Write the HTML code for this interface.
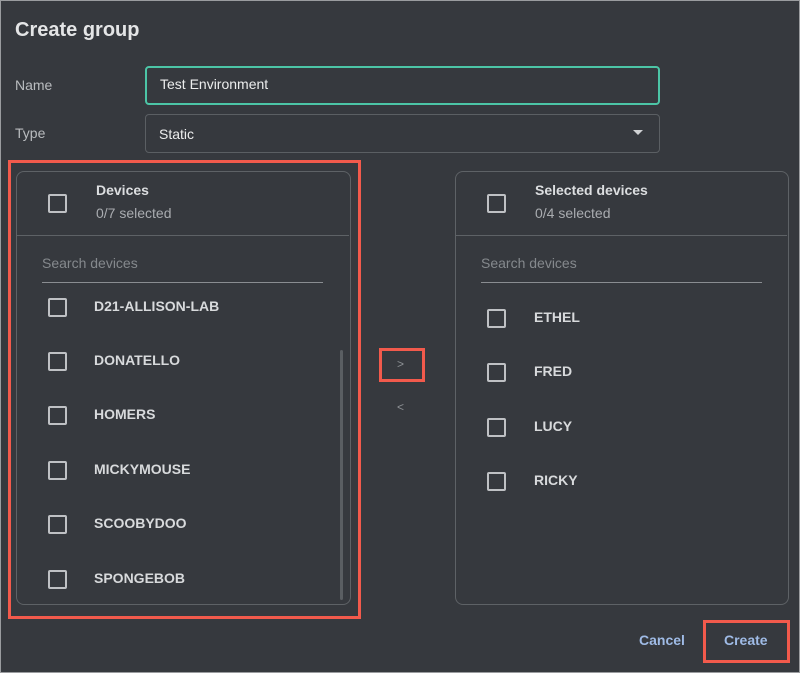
<!DOCTYPE html>
<html><head><style>
body{margin:0;width:800px;height:673px;background:#36393e;font-family:"Liberation Sans",sans-serif;position:relative;overflow:hidden;color:#e6e7e8}
.a{position:absolute}
.frame{left:0;top:0;width:798px;height:671px;border:1px solid #9a9c9f}
.cb{position:absolute;width:15px;height:15px;border:2px solid #bfc1c4;border-radius:2px}
.it{position:absolute;font-size:14px;font-weight:bold;color:#d8dadc}
.panel{border:1px solid #5e6266;border-radius:8px}
.red{border:3px solid #f25a4c}
</style></head><body>
<div class="a frame"></div>
<div class="a" style="left:15px;top:19px;font-size:20px;font-weight:bold;color:#e4e5e6">Create group</div>
<div class="a" style="left:15px;top:77px;font-size:14px;color:#b9bcbf">Name</div>
<div class="a" style="left:15px;top:125px;font-size:14px;color:#b9bcbf">Type</div>
<div class="a" style="left:145px;top:66px;width:511px;height:35px;border:2px solid #4cc5a6;border-radius:4px"></div>
<div class="a" style="left:160px;top:76px;font-size:14px;color:#eceded">Test Environment</div>
<div class="a" style="left:145px;top:114px;width:513px;height:37px;border:1px solid #5b5f63;border-radius:4px"></div>
<div class="a" style="left:159px;top:126px;font-size:14px;color:#eceded">Static</div>
<div class="a" style="left:633px;top:130px;width:0;height:0;border-left:5px solid transparent;border-right:5px solid transparent;border-top:5px solid #d0d2d4"></div>

<div class="a red" style="left:8px;top:160px;width:347px;height:453px"></div>
<div class="a panel" style="left:16px;top:171px;width:333px;height:432px"></div>
<div class="a" style="left:17px;top:235px;width:332px;height:1px;background:#5e6266"></div>
<div class="cb" style="left:48px;top:194px"></div>
<div class="a" style="left:96px;top:182px;font-size:14px;font-weight:bold;color:#dcdee0">Devices</div>
<div class="a" style="left:96px;top:205px;font-size:14px;color:#a9acb0">0/7 selected</div>
<div class="a" style="left:42px;top:255px;font-size:14px;color:#85898d">Search devices</div>
<div class="a" style="left:42px;top:282px;width:281px;height:1px;background:#8a8d91"></div>
<div class="a" style="left:340px;top:350px;width:3px;height:250px;background:#5a5e62;border-radius:2px"></div>
<div class="cb" style="left:48px;top:298px"></div><div class="it" style="left:94px;top:298px">D21-ALLISON-LAB</div>
<div class="cb" style="left:48px;top:352px"></div><div class="it" style="left:94px;top:352px">DONATELLO</div>
<div class="cb" style="left:48px;top:406px"></div><div class="it" style="left:94px;top:406px">HOMERS</div>
<div class="cb" style="left:48px;top:461px"></div><div class="it" style="left:94px;top:461px">MICKYMOUSE</div>
<div class="cb" style="left:48px;top:515px"></div><div class="it" style="left:94px;top:515px">SCOOBYDOO</div>
<div class="cb" style="left:48px;top:570px"></div><div class="it" style="left:94px;top:570px">SPONGEBOB</div>

<div class="a red" style="left:379px;top:348px;width:40px;height:28px"></div>
<div class="a" style="left:397px;top:357px;font-size:12px;color:#8d9195">&gt;</div>
<div class="a" style="left:397px;top:400px;font-size:12px;color:#8d9195">&lt;</div>

<div class="a panel" style="left:455px;top:171px;width:332px;height:432px"></div>
<div class="a" style="left:456px;top:235px;width:331px;height:1px;background:#5e6266"></div>
<div class="cb" style="left:487px;top:194px"></div>
<div class="a" style="left:535px;top:182px;font-size:14px;font-weight:bold;color:#dcdee0">Selected devices</div>
<div class="a" style="left:535px;top:205px;font-size:14px;color:#a9acb0">0/4 selected</div>
<div class="a" style="left:481px;top:255px;font-size:14px;color:#85898d">Search devices</div>
<div class="a" style="left:481px;top:282px;width:281px;height:1px;background:#8a8d91"></div>
<div class="cb" style="left:487px;top:309px"></div><div class="it" style="left:534px;top:309px">ETHEL</div>
<div class="cb" style="left:487px;top:363px"></div><div class="it" style="left:534px;top:363px">FRED</div>
<div class="cb" style="left:487px;top:418px"></div><div class="it" style="left:534px;top:418px">LUCY</div>
<div class="cb" style="left:487px;top:472px"></div><div class="it" style="left:534px;top:472px">RICKY</div>

<div class="a" style="left:639px;top:632px;font-size:14px;font-weight:bold;color:#9fbbe6">Cancel</div>
<div class="a red" style="left:703px;top:620px;width:81px;height:37px"></div>
<div class="a" style="left:724px;top:632px;font-size:14px;font-weight:bold;color:#9fbbe6">Create</div>
</body></html>
